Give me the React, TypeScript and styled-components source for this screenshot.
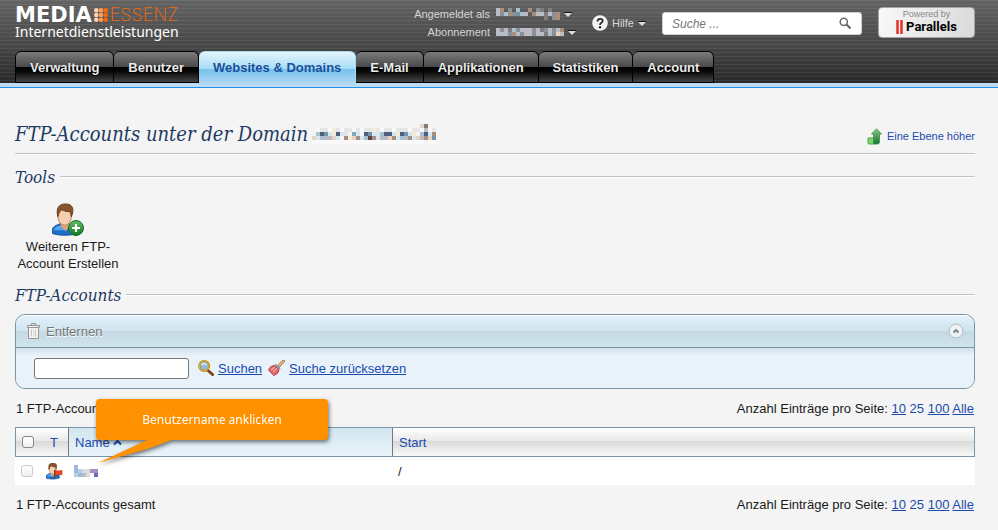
import React from 'react';
import styled, { createGlobalStyle, css } from 'styled-components';

const sans = '"Liberation Sans", Arial, sans-serif';
const serif = '"DejaVu Serif Condensed", "DejaVu Serif", Georgia, serif';
const humanist = '"Noto Sans", "Open Sans", sans-serif';

const Global = createGlobalStyle`
  * { box-sizing: border-box; }
  body { margin: 0; background: #f4f4f4; color: #1a1a1a; font: 13px/17px ${sans}; }
  button { font: inherit; border: 0; padding: 0; background: none; cursor: pointer; }
  a { color: #1a4bb0; }
  svg { display: block; flex: none; }
`;

const Header = styled.header`
  background:
    repeating-linear-gradient(rgba(255, 255, 255, 0.07) 0 1px, transparent 1px 4px),
    linear-gradient(#636363, #484848 50%, #262626);
  border-bottom: 1px solid #1e90e8;
`;
const TopBar = styled.div`
  display: flex;
  align-items: flex-start;
  gap: 16px;
  height: 51px;
  padding: 7px 23px 0 15px;
`;
const Brand = styled.a`
  margin-right: auto;
  color: #fff;
  text-decoration: none;
`;
const BrandName = styled.span`
  display: flex;
  align-items: center;
  height: 16px;
  gap: 2px;
  font: 700 21px/16px "DejaVu Sans", Verdana, sans-serif;
`;
const BrandThin = styled.span`
  color: #f26a0a;
  font: 200 18px/16px Inter, sans-serif;
`;
const BrandLine = styled.span`
  display: block;
  font: 14px/17px ${humanist};
`;
const Session = styled.div`
  display: grid;
  grid-template-columns: auto auto;
  column-gap: 6px;
  font-size: 11px;
  line-height: 18px;
  color: #d6d6d6;
  text-align: right;
  margin-top: -2px;
`;
const MenuButton = styled.button`
  display: flex;
  align-items: center;
  gap: 4px;
  color: #d6d6d6;
`;
const HelpButton = styled(MenuButton)`
  height: 32px;
  font-size: 11px;
`;
const SearchForm = styled.form`
  display: flex;
  align-items: center;
  width: 200px;
  height: 23px;
  margin-top: 5px;
  padding: 0 9px;
  background: #fff;
  border: 1px solid #cfcfcf;
  border-radius: 3px;
`;
const SearchInput = styled.input`
  flex: 1;
  min-width: 0;
  padding: 0;
  border: 0;
  outline: 0;
  background: none;
  font: italic 12px/16px ${sans};
  &::placeholder { color: #777; opacity: 1; }
`;
const Powered = styled.a`
  display: flex;
  flex-direction: column;
  align-items: center;
  width: 97px;
  height: 31px;
  padding-top: 1px;
  border: 1px solid #a5a5a5;
  border-radius: 4px;
  background: linear-gradient(100deg, #f8f8f8, #dadada);
  color: #8a8a8a;
  text-decoration: none;
  font-size: 9px;
  line-height: 10px;
`;
const Vendor = styled.span`
  display: flex;
  align-items: center;
  gap: 3px;
  color: #000;
  font: 700 13px/15px Roboto, sans-serif;
`;

const Tabs = styled.nav`
  display: flex;
  height: 36px;
  padding: 0 15px;
  background: linear-gradient(transparent 32px, #bfdcf5 32px);
`;
const Tab = styled.a<{ $active?: boolean }>`
  height: 32px;
  padding: 0 14px;
  border: 1px solid #000;
  border-left-width: 0;
  border-radius: 6px 6px 0 0;
  background: linear-gradient(#7b7b7b, #484848 50%, #000 50%, #080808 65%, #454545);
  color: #ececec;
  font-weight: 700;
  line-height: 31px;
  text-decoration: none;
  text-shadow: 0 1px 1px #000;
  &:first-child { border-left-width: 1px; }
  ${(p) =>
    p.$active &&
    css`
      height: 36px;
      border-color: #a9d8f3;
      border-bottom: 0;
      background: linear-gradient(#e4f5fd, #a5dcf5 48%, #74c1ea 48%, #bfdcf5);
      color: #1b4f9c;
      text-shadow: none;
    `}
`;

const Main = styled.main`
  padding: 32px 23px 10px 15px;
`;
const TitleRow = styled.div`
  display: flex;
  align-items: center;
  height: 34px;
  border-bottom: 1px solid #c2c2c2;
  box-shadow: 0 1px #fff;
`;
const Title = styled.h1`
  display: flex;
  align-items: center;
  gap: 4px;
  height: 34px;
  margin: 0 auto 0 0;
  padding-bottom: 6px;
  color: #1d3a63;
  font: italic 20px/28px ${serif};
`;
const UpLink = styled.a`
  display: flex;
  align-items: center;
  gap: 4px;
  font-size: 11px;
  text-decoration: none;
`;
const SectionTitle = styled.h2`
  display: flex;
  align-items: center;
  gap: 5px;
  margin: 12px 0 0;
  color: #1d3a63;
  font: italic 17px/22px ${serif};
  &::after {
    content: '';
    flex: 1;
    height: 2px;
    background: linear-gradient(#c2c2c2 1px, #fff 1px);
  }
`;
const Tool = styled.button`
  display: flex;
  flex-direction: column;
  align-items: center;
  gap: 1px;
  width: 106px;
  margin: 15px 0 0;
  color: #1a1a1a;
`;
const Panel = styled.section`
  margin-top: 8px;
  border: 1px solid #7896a8;
  border-radius: 10px;
  background: #e9f2f9;
  overflow: hidden;
`;
const PanelHead = styled.div`
  display: flex;
  align-items: center;
  justify-content: space-between;
  height: 33px;
  padding: 0 10px;
  border-bottom: 1px solid #7896a8;
  background: linear-gradient(#fff 1px, #e2f2fb 1px, #cfe3ee 50%, #c4d9e2 50%, #cfe3ec);
`;
const RemoveButton = styled.button`
  display: flex;
  align-items: center;
  gap: 5px;
  color: #757575;
  text-shadow: 0 1px #fff;
`;
const FilterForm = styled.form`
  display: flex;
  align-items: center;
  height: 40px;
  padding: 0 18px;
  background: linear-gradient(#d3e1ea, #e9f2f9 8px);
`;
const FilterInput = styled.input`
  width: 155px;
  height: 21px;
  margin-right: 9px;
  border: 1px solid #777;
  border-radius: 3px;
  background: #fff;
  font: 13px/17px ${sans};
`;
const IconLink = styled.a`
  display: flex;
  align-items: center;
  gap: 4px;
  margin-right: 6px;
`;
const Info = styled.div`
  display: flex;
  justify-content: space-between;
  margin: 11px 1px 10px;
`;
const ListArea = styled.section`
  position: relative;
`;
const Table = styled.table`
  width: 100%;
  border-spacing: 0;
  table-layout: fixed;
  text-align: left;
`;
const Th = styled.th<{ $w?: number; $sorted?: boolean; $divide?: boolean }>`
  ${(p) => p.$w && `width: ${p.$w}px;`}
  height: 30px;
  padding: 0 6px;
  border: 1px solid #7896a8;
  border-width: 1px 0;
  ${(p) => p.$divide && 'border-left: 1px solid #707880;'}
  background: ${(p) =>
    p.$sorted
      ? 'linear-gradient(#d2e5ee, #e9f4fa)'
      : 'linear-gradient(#fff, #e8e8e8 48%, #dadada 48%, #f8f8f8)'};
  font-weight: 400;
  &:first-child { border-left-width: 1px; }
  &:last-child { border-right-width: 1px; }
  a { display: inline-flex; align-items: center; gap: 3px; text-decoration: none; }
`;
const Td = styled.td`
  height: 28px;
  padding: 0 6px;
  background: #fff;
`;
const TypeCell = styled(Td)`
  padding: 0 2px;
`;
const Check = styled.input`
  appearance: none;
  display: block;
  width: 12px;
  height: 12px;
  margin: 0;
  border: 1px solid #868686;
  border-radius: 3px;
  background: linear-gradient(#fff, #f0f0f0);
  &:disabled { border-color: #ccc; }
`;
const Callout = styled.div`
  position: absolute;
  left: 81px;
  top: -28px;
  width: 232px;
  height: 41px;
  border-radius: 4px;
  background: #ff9000;
  color: #fff;
  font: 12px/42px ${humanist};
  text-align: center;
  filter: drop-shadow(1px 2px 2px rgba(0, 0, 0, 0.55));
  svg { position: absolute; left: 0; top: 40px; }
`;
const PageNow = styled.span`
  color: #1a4bb0;
`;

const tones: Record<string, string> = {
  a: '#e6e6e6', b: '#d4e8f2', c: '#e6d3c4', d: '#4f607f', e: '#7493ad', f: '#a88f7c',
  g: '#b9bcc4', h: '#8d8f96', i: '#a9c0cf', j: '#5a4444', k: '#f3ead8', l: '#7eaac0',
  m: '#9db9e0', n: '#bccbe6', o: '#dcdce4', p: '#a191c0', q: '#6c68b8', r: '#7d7d7d',
  s: '#f9f9f9',
};
const Mosaic = ({ rows, cell = 4 }: { rows: string[]; cell?: number }) => (
  <svg width={rows[0].length * cell} height={rows.length * cell} shapeRendering="crispEdges" aria-hidden="true">
    {rows.flatMap((row, y) =>
      [...row].map((t, x) =>
        tones[t] ? <rect key={`${x}-${y}`} x={x * cell} y={y * cell} width={cell} height={cell} fill={tones[t]} /> : null,
      ),
    )}
  </svg>
);

const Caret = () => (
  <svg width="8" height="5" aria-hidden="true">
    <path d="M0 .5h8" stroke="#111" />
    <path d="M0 1h8L4 5z" fill="#ddd" />
  </svg>
);

const Dots = () => (
  <svg width="14" height="14" aria-hidden="true">
    {[0, 1, 2].flatMap((y) =>
      ['#ffd0ad', '#ff9a50', '#f26a0a'].map((c, x) => (
        <circle key={`${x}${y}`} cx={2.3 + x * 4.7} cy={2.3 + y * 4.7} r="2.3" fill={c} />
      )),
    )}
  </svg>
);

const Person = ({ size }: { size: number }) => (
  <g transform={`scale(${size / 32})`}>
    <path d="M0 28c0-5 5-6 9-8l7 2 5-2c4 2 6 4 6 10-6 3-22 3-27 0z" fill="#1d70c8" stroke="#124c98" />
    <path d="M2 27c1-4 5-4 8-5l3 5z" fill="#53a5ee" />
    <path d="M9 18h9v5l-4 5-5-5z" fill="#dba47f" />
    <ellipse cx="13" cy="12" rx="7" ry="10" fill="#f6cfae" stroke="#b67d56" />
    <path d="M6 13C4 4 7 0 14 0c8 0 9 6 6 13l-1-5c-4 0-7-1-9-2-2 1-3 4-4 7z" fill="#8a552b" stroke="#633916" />
  </g>
);
const AddUserIcon = () => (
  <svg width="32" height="34" viewBox="0 0 32 34" aria-hidden="true">
    <defs>
      <linearGradient id="plus" x2="0" y2="1"><stop stopColor="#68be68" /><stop offset="1" stopColor="#117322" /></linearGradient>
    </defs>
    <g transform="translate(0 1)"><Person size={31} /></g>
    <circle cx="24" cy="25" r="7.5" fill="url(#plus)" stroke="#15702a" />
    <path d="M24 21v8M20 25h8" stroke="#fff" strokeWidth="2.2" />
  </svg>
);
const FlagUserIcon = () => (
  <svg width="17" height="17" viewBox="0 0 17 17" aria-hidden="true">
    <Person size={16} />
    <path d="M8.5 7v9" stroke="#6b3a18" />
    <path d="M9 7.500l3 .5 4-.5v4l-3 .5-4-.5z" fill="#f04b24" stroke="#c22b12" strokeWidth=".6" />
  </svg>
);
const UpIcon = () => (
  <svg width="16" height="17" viewBox="0 0 16 17" aria-hidden="true">
    <defs>
      <linearGradient id="up" x2="0" y2="1"><stop stopColor="#8ac98a" /><stop offset="1" stopColor="#12752a" /></linearGradient>
    </defs>
    <path d="M1 10h6v6H2q-1 0-1-1z" fill="#7dd36d" stroke="#4ea848" />
    <path d="M9.500 .8L14.500 6H12.500v8q0 2-2 2H6.500V6H4.500z" fill="url(#up)" stroke="#3c8f48" strokeWidth=".8" />
  </svg>
);
const TrashIcon = () => (
  <svg width="15" height="17" viewBox="0 0 15 17" fill="none" stroke="#969696" aria-hidden="true">
    <path d="M2.500 4.500h10v11h-10z" fill="#f3f3f3" />
    <path d="M1.500 2.500h12v2h-12z" fill="#eee" />
    <path d="M5.500 2.500v-2h4v2" />
    <path d="M5.500 6.500v7M9.500 6.500v7" stroke="#c4c4c4" />
    <path d="M7.500 6.500v7" stroke="#ddd" />
  </svg>
);
const LensIcon = () => (
  <svg width="16" height="16" viewBox="0 0 16 16" aria-hidden="true">
    <path d="M10 10.500l4.500 4" stroke="#7b431a" strokeWidth="3" strokeLinecap="round" />
    <circle cx="6.200" cy="6" r="5" fill="#91b9cf" stroke="#a9770e" strokeWidth="2" />
    <circle cx="6.200" cy="6" r="5" fill="none" stroke="#efbe3a" strokeWidth="1" />
    <path d="M3.500 5q2.500-3 5 0" stroke="#dceef7" strokeWidth="1.500" fill="none" />
  </svg>
);
const BroomIcon = () => (
  <svg width="17" height="16" viewBox="0 0 17 16" aria-hidden="true">
    <path d="M10 7l5.500-6" stroke="#a06c47" strokeWidth="3" strokeLinecap="round" />
    <path d="M10 7l5.500-6" stroke="#eabb90" strokeWidth="1.600" strokeLinecap="round" />
    <path d="M6 5.500l5 4q0 4-5 6L.8 10.500Q1 6.500 6 5.500z" fill="#e46a6f" stroke="#b53842" />
    <path d="M3 10l4-3M5 12l4-4" stroke="#f9b9b8" />
    <path d="M7 4.500l5 4.500" stroke="#8f969b" strokeWidth="2" />
  </svg>
);
const SearchIcon = () => (
  <svg width="13" height="13" viewBox="0 0 13 13" fill="none" stroke="#666" aria-hidden="true">
    <circle cx="4.800" cy="4.800" r="3.600" strokeWidth="1.500" />
    <path d="M7.500 7.500l4 4" strokeWidth="2.200" />
  </svg>
);
const HelpIcon = () => (
  <svg width="16" height="16" viewBox="0 0 16 16" fill="none" aria-hidden="true">
    <circle cx="8" cy="8" r="7.800" fill="#f3f3f3" />
    <path d="M5.500 6.500C5.500 3 10.700 3 10.700 6 10.700 8 8 7.700 8 10" stroke="#2b2b2b" strokeWidth="1.800" />
    <circle cx="8" cy="12.200" r="1.200" fill="#2b2b2b" />
  </svg>
);
const CollapseIcon = () => (
  <svg width="16" height="16" viewBox="0 0 16 16" aria-hidden="true">
    <circle cx="8" cy="8" r="7" fill="#eef2f5" stroke="#a9b8c1" />
    <path d="M5.500 9.500L8 7l2.500 2.500" stroke="#718089" strokeWidth="1.800" fill="none" />
  </svg>
);

const Pager = () => (
  <Info>
    <span>1 FTP-Accounts gesamt</span>
    <span>
      Anzahl Einträge pro Seite: <a href="#10">10</a> <PageNow>25</PageNow> <a href="#100">100</a> <a href="#alle">Alle</a>
    </span>
  </Info>
);

const tabs = ['Verwaltung', 'Benutzer', 'Websites & Domains', 'E-Mail', 'Applikationen', 'Statistiken', 'Account'];

export default function App() {
  return (
    <>
      <Global />
      <Header>
        <TopBar>
          <Brand href="#start">
            <BrandName>MEDIA<Dots /><BrandThin>ESSENZ</BrandThin></BrandName>
            <BrandLine>Internetdienstleistungen</BrandLine>
          </Brand>
          <Session>
            <span>Angemeldet als</span>
            <MenuButton aria-label="Benutzermenü">
              <Mosaic rows={['gf.h.i..f.hr.r..', 'ghifheig.fggrghf', '............r.hf']} />
              <Caret />
            </MenuButton>
            <span>Abonnement</span>
            <MenuButton aria-label="Abonnementmenü">
              <Mosaic rows={['ghgrihggghgrhghgf', 'ggihfghgghggrihcg']} />
              <Caret />
            </MenuButton>
          </Session>
          <HelpButton><HelpIcon />Hilfe<Caret /></HelpButton>
          <SearchForm>
            <SearchInput aria-label="Suche" placeholder="Suche ..." />
            <button type="button" aria-label="Suche starten"><SearchIcon /></button>
          </SearchForm>
          <Powered href="#parallels">
            Powered by
            <Vendor>
              <svg width="7" height="14" aria-hidden="true"><path d="M1.500 0v14M5.500 0v14" stroke="#e8302a" strokeWidth="2.500" /></svg>
              Parallels
            </Vendor>
          </Powered>
        </TopBar>
        <Tabs>
          {tabs.map((t, i) => <Tab key={t} href="#tab" $active={i === 2}>{t}</Tab>)}
        </Tabs>
      </Header>
      <Main>
        <TitleRow>
          <Title>
            FTP-Accounts unter der Domain
            <Mosaic rows={[
              '...........................cr..',
              '.saaskasaasasaakasaasaaasaasgsa',
              '.idebkdba.lb.debbiddbkdebk.idbf',
              'cbiggcb.fkcfbijfbggcfbigfbcgfce',
              'ssssssssssssssssssssssssssss.ss',
            ]} />
          </Title>
          <UpLink href="#up"><UpIcon />Eine Ebene höher</UpLink>
        </TitleRow>
        <SectionTitle>Tools</SectionTitle>
        <Tool><AddUserIcon /><span>Weiteren FTP-Account Erstellen</span></Tool>
        <SectionTitle>FTP-Accounts</SectionTitle>
        <Panel>
          <PanelHead>
            <RemoveButton><TrashIcon />Entfernen</RemoveButton>
            <button aria-label="Einklappen"><CollapseIcon /></button>
          </PanelHead>
          <FilterForm>
            <FilterInput aria-label="Suchbegriff" />
            <IconLink href="#suchen"><LensIcon />Suchen</IconLink>
            <IconLink href="#reset"><BroomIcon />Suche zurücksetzen</IconLink>
          </FilterForm>
        </Panel>
        <Pager />
        <ListArea>
          <Table>
            <thead>
              <tr>
                <Th $w={29}><Check type="checkbox" aria-label="Alle auswählen" /></Th>
                <Th $w={24}><a href="#typ">T</a></Th>
                <Th $w={324} $sorted $divide>
                  <a href="#name">Name<svg width="9" height="7" aria-hidden="true"><path d="M1 5.500l3.500-3.500L8 5.500" fill="none" stroke="#1a4bb0" strokeWidth="2" /></svg></a>
                </Th>
                <Th $divide><a href="#pfad">Start</a></Th>
              </tr>
            </thead>
            <tbody>
              <tr>
                <Td><Check type="checkbox" disabled aria-label="Konto auswählen" /></Td>
                <TypeCell><FlagUserIcon /></TypeCell>
                <Td><a href="#konto" aria-label="Konto"><Mosaic rows={['m.....', 'mnoopp', 'nmgo.q']} /></a></Td>
                <Td>/</Td>
              </tr>
            </tbody>
          </Table>
          <Callout>
            Benutzername anklicken
            <svg width="80" height="25" aria-hidden="true"><path d="M51 0h26q-8 4-26 10L2 24 51 1z" fill="#ff9000" /></svg>
          </Callout>
        </ListArea>
        <Pager />
      </Main>
    </>
  );
}
